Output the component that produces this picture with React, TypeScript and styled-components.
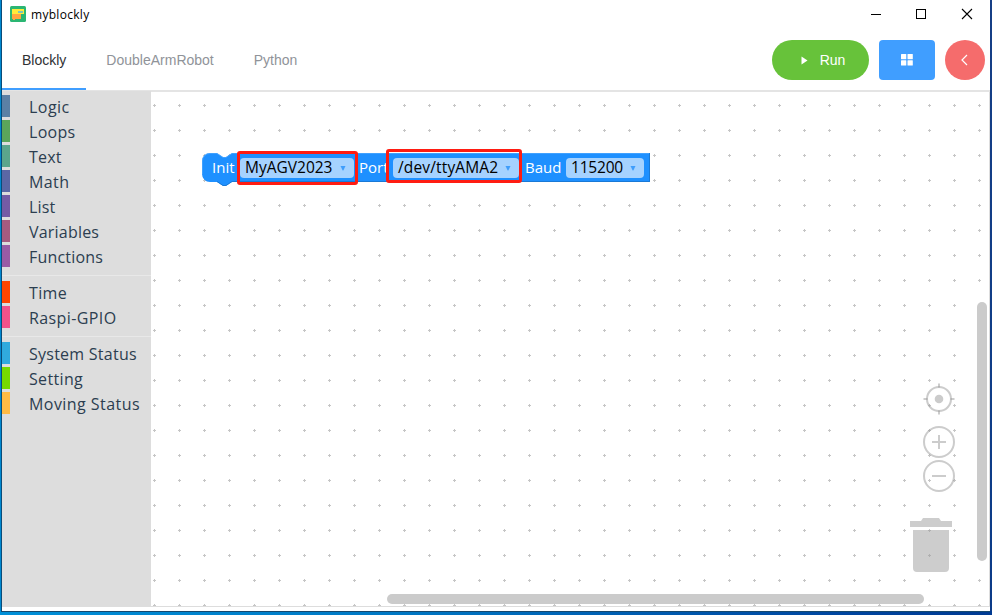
import React from "react";
import styled, { createGlobalStyle } from "styled-components";

const GlobalStyle = createGlobalStyle`
  * { box-sizing: border-box; }
  html, body { margin: 0; padding: 0; overflow: hidden; }
  button { border: 0; padding: 0; font: inherit; }
`;

const Desktop = styled.div`
  width: 992px;
  height: 615px;
  padding: 0 2px 3px 1px;
  background:
    linear-gradient(90deg, #0090d8, #0078c4 40%, #0046a0 85%, #003a92) bottom / 100% 4px no-repeat,
    linear-gradient(90deg, #0088d0 1px, transparent 1px),
    linear-gradient(#163f86, #0b3b88);
`;

const Window = styled.div`
  display: flex;
  flex-direction: column;
  width: 989px;
  height: 612px;
  background: #fff;
  border-left: 1px solid #0a4c78;
  border-bottom: 1px solid #17496e;
`;

const TitleBar = styled.header`
  display: flex;
  align-items: center;
  justify-content: space-between;
  flex: none;
  height: 30px;
  padding-left: 8px;
`;

const AppTitle = styled.div`
  display: flex;
  align-items: center;
  gap: 5px;
  padding-bottom: 2px;
  font: 12px/16px "Open Sans", sans-serif;
  letter-spacing: 0.3px;
  color: #000;
`;

const TitleText = styled.span`
  padding-top: 2px;
`;

const WindowButtons = styled.div`
  display: flex;
  align-items: center;
  gap: 34px;
  padding: 0 17px 2px 0;
  svg { display: block; }
`;

const Toolbar = styled.nav`
  display: flex;
  align-items: stretch;
  justify-content: space-between;
  flex: none;
  height: 62px;
  border-bottom: 2px solid #e4e4e4;
`;

const Tabs = styled.div`
  display: flex;
`;

const Tab = styled.div<{ $active?: boolean }>`
  height: 60px;
  padding: 0 20px;
  font: 14px/60px "Liberation Sans", Arial, sans-serif;
  color: ${(p) => (p.$active ? "#303133" : "#909399")};
  border-bottom: 2px solid ${(p) => (p.$active ? "#409eff" : "transparent")};
`;

const Actions = styled.div`
  display: flex;
  align-items: center;
  gap: 10px;
  padding-right: 5px;
`;

const ActionButton = styled.button<{ $color: string; $width: number; $radius: number; $indent?: number }>`
  display: flex;
  align-items: center;
  justify-content: center;
  width: ${(p) => p.$width}px;
  height: 40px;
  padding-left: ${(p) => p.$indent ?? 0}px;
  border-radius: ${(p) => p.$radius}px;
  background: ${(p) => p.$color};
  color: #fff;
  font: 14px "Liberation Sans", Arial, sans-serif;
  gap: 12px;
`;

const Main = styled.main`
  display: flex;
  flex: none;
  height: 515px;
`;

const Toolbox = styled.aside`
  flex: none;
  width: 149px;
  padding-top: 4px;
  margin-top: -1px;
  background: #ddd;
`;

const Category = styled.div<{ $color: string }>`
  height: 22px;
  margin-bottom: 3px;
  padding-left: 19px;
  border-left: 8px solid ${(p) => p.$color};
  font: 16px/24px "Open Sans", "Noto Sans", sans-serif;
  white-space: nowrap;
  color: #2c3e50;
`;

const CategoryName = styled.span<{ $spacing: number }>`
  letter-spacing: ${(p) => p.$spacing}px;
`;

const Separator = styled.div`
  height: 1px;
  margin: 8px 0 5px;
  background: #e8e8e8;
`;

const Workspace = styled.section`
  position: relative;
  flex: 1;
  height: 515px;
  overflow: hidden;
  border-right: 1px solid #ddd;
  border-bottom: 1px solid #ddd;
`;

const WorkspaceGrid = styled.svg`
  display: block;
  width: 100%;
  height: 100%;
`;

const Block = styled.div`
  position: absolute;
  left: 51px;
  top: 61px;
  width: 448px;
  height: 34px;
`;

const BlockShape = styled.svg`
  position: absolute;
  inset: 0;
`;

const BlockRow = styled.div`
  position: relative;
  display: flex;
  align-items: center;
  height: 30px;
  padding-left: 10px;
`;

const Label = styled.span<{ $width: number }>`
  flex: none;
  width: ${(p) => p.$width}px;
  font: 15px/18px "Open Sans", "Noto Sans", sans-serif;
  margin-top: -2px;
  white-space: nowrap;
  color: #fff;
`;

const Dropdown = styled.span<{ $width: number; $gap: number; $spacing?: number }>`
  flex: none;
  display: flex;
  align-items: center;
  justify-content: space-between;
  width: ${(p) => p.$width}px;
  height: 20px;
  margin-right: ${(p) => p.$gap}px;
  padding: 0 8px 1px 5px;
  border-radius: 4px;
  background: #a5d2ff;
  font: 15.5px/19px "Open Sans", "Noto Sans", sans-serif;
  letter-spacing: ${(p) => p.$spacing ?? 0}px;
  color: #000;
`;

const Highlight = styled.div<{ $x: number; $y: number; $w: number; $h: number }>`
  position: absolute;
  left: ${(p) => p.$x}px;
  top: ${(p) => p.$y}px;
  width: ${(p) => p.$w}px;
  height: ${(p) => p.$h}px;
  border: 3px solid #ff1c12;
  border-radius: 3px;
`;

const Controls = styled.svg`
  position: absolute;
  left: 758px;
  top: 290px;
`;

const ScrollHandle = styled.div<{ $vertical?: boolean }>`
  position: absolute;
  left: ${(p) => (p.$vertical ? 826 : 236)}px;
  top: ${(p) => (p.$vertical ? 210 : 502)}px;
  width: ${(p) => (p.$vertical ? 10 : 537)}px;
  height: ${(p) => (p.$vertical ? 259 : 10)}px;
  border-radius: 5px;
  background: #cbcbcb;
`;

const groups: { name: string; color: string; spacing: number }[][] = [
  [
    { name: "Logic", color: "#5b80a5", spacing: 0.45 },
    { name: "Loops", color: "#5ba55b", spacing: 0.3 },
    { name: "Text", color: "#5ba58c", spacing: 0.2 },
    { name: "Math", color: "#5b67a5", spacing: 0.4 },
    { name: "List", color: "#745ba5", spacing: 0.2 },
    { name: "Variables", color: "#a55b80", spacing: 0.2 },
    { name: "Functions", color: "#995ba5", spacing: 0.2 },
  ],
  [
    { name: "Time", color: "#ff4500", spacing: 0.35 },
    { name: "Raspi-GPIO", color: "#f2528a", spacing: 0.4 },
  ],
  [
    { name: "System Status", color: "#30aadd", spacing: 0.25 },
    { name: "Setting", color: "#76da00", spacing: 0.35 },
    { name: "Moving Status", color: "#ffbb44", spacing: 0.45 },
  ],
];

const Logo = () => (
  <svg width="16" height="16" viewBox="0 0 16 16">
    <rect width="16" height="16" rx="1.5" fill="#2bb673" />
    <path d="M2 3h12v5H2z" fill="#ffeb3b" />
    <path d="M8 5h5v2H8z" fill="#7cc6b8" />
    <path d="M2 8h9v5H5v1H3v-1H2z" fill="#ffa640" />
  </svg>
);

const Arrow = () => (
  <svg width="6" height="6" viewBox="0 0 6 6">
    <path d="M.5 1h5L3.300 5.500h-.6z" fill="#3f9dfb" />
  </svg>
);

export default function App() {
  return (
    <>
      <GlobalStyle />
      <Desktop>
        <Window>
          <TitleBar>
            <AppTitle>
              <Logo />
              <TitleText>myblockly</TitleText>
            </AppTitle>
            <WindowButtons>
              <svg width="12" height="12" shapeRendering="crispEdges">
                <path d="M2 6.5h10" stroke="#000" />
              </svg>
              <svg width="12" height="12" shapeRendering="crispEdges">
                <path d="M1.500 1.500h9v9h-9z" fill="none" stroke="#000" />
              </svg>
              <svg width="12" height="12">
                <path d="M1 1l10 10M11 1L1 11" stroke="#000" strokeWidth="1.1" />
              </svg>
            </WindowButtons>
          </TitleBar>
          <Toolbar>
            <Tabs>
              <Tab $active>Blockly</Tab>
              <Tab>DoubleArmRobot</Tab>
              <Tab>Python</Tab>
            </Tabs>
            <Actions>
              <ActionButton $color="#67c23a" $width={97} $radius={20} $indent={5}>
                <svg width="7" height="9">
                  <path d="M.5 .5L6.500 4.500L.5 8.500z" fill="#fff" />
                </svg>
                Run
              </ActionButton>
              <ActionButton $color="#409eff" $width={56} $radius={4}>
                <svg width="12" height="12" fill="#fff">
                  <rect width="5.300" height="5.300" rx=".5" />
                  <rect x="6.500" width="5.300" height="5.300" rx=".5" />
                  <rect y="6.300" width="5.300" height="5.300" rx=".5" />
                  <rect x="6.500" y="6.300" width="5.300" height="5.300" rx=".5" />
                </svg>
              </ActionButton>
              <ActionButton $color="#f56c6c" $width={40} $radius={20}>
                <svg width="12" height="12">
                  <path d="M8 1L3 6l5 5" fill="none" stroke="#fff" strokeWidth="1.200" />
                </svg>
              </ActionButton>
            </Actions>
          </Toolbar>
          <Main>
            <Toolbox>
              {groups.map((group, i) => (
                <React.Fragment key={i}>
                  {i > 0 && <Separator />}
                  {group.map((c) => (
                    <Category key={c.name} $color={c.color}>
                      <CategoryName $spacing={c.spacing}>{c.name}</CategoryName>
                    </Category>
                  ))}
                </React.Fragment>
              ))}
            </Toolbox>
            <Workspace>
              <WorkspaceGrid>
                <defs>
                  <pattern id="grid" x="-9" y="1" width="25" height="25" patternUnits="userSpaceOnUse">
                    <path d="M11 12.500h3M12.500 11v3" stroke="#c6c6c6" />
                  </pattern>
                </defs>
                <rect width="100%" height="100%" fill="url(#grid)" />
              </WorkspaceGrid>
              <Block>
                <BlockShape width="448" height="34">
                  <path
                    d="M0 8A8 8 0 0 1 8 0H15l6 4h3l6-4H448V29H30l-6 4h-3l-6-4H8A8 8 0 0 1 0 21z"
                    fill="#1e90ff"
                  />
                  <path d="M15 28.500l6 4h3l6-4H447.500V0" fill="none" stroke="#1873cc" strokeOpacity=".8" />
                  <path d="M.5 21V8A7.500 7.500 0 0 1 8 .5H15l6 4h3l6-4H447" fill="none" stroke="#61b1ff" strokeOpacity=".5" />
                </BlockShape>
                <BlockRow>
                  <Label $width={28}>Init</Label>
                  <Dropdown $width={114} $gap={5}>MyAGV2023<Arrow /></Dropdown>
                  <Label $width={34}>Port</Label>
                  <Dropdown $width={126} $gap={6} $spacing={0.15}>/dev/ttyAMA2<Arrow /></Dropdown>
                  <Label $width={41}>Baud</Label>
                  <Dropdown $width={78} $gap={0} $spacing={-0.2}>115200<Arrow /></Dropdown>
                </BlockRow>
                <Highlight $x={35} $y={-2} $w={121} $h={34} />
                <Highlight $x={184} $y={-4} $w={136} $h={34} />
              </Block>
              <Controls width="60" height="192" fill="none" stroke="#999" strokeOpacity=".5" strokeWidth="2">
                <circle cx="30" cy="17" r="12" />
                <circle cx="30" cy="17" r="4.300" fill="#cbcbcb" stroke="none" />
                <path d="M30 1.500v4M30 28.500v4M14.500 17h4M41.500 17h4" />
                <circle cx="30" cy="60" r="15" />
                <path d="M30 53v14M23 60h14" />
                <circle cx="30" cy="94" r="15" />
                <path d="M23 94h14" />
                <path
                  d="M1 139h11l2-3h16l2 3h11v6H1zM4 148h36v38a4 4 0 0 1-4 4H8a4 4 0 0 1-4-4z"
                  fill="#999"
                  fillOpacity=".49"
                  stroke="none"
                />
              </Controls>
              <ScrollHandle $vertical />
              <ScrollHandle />
            </Workspace>
          </Main>
        </Window>
      </Desktop>
    </>
  );
}
